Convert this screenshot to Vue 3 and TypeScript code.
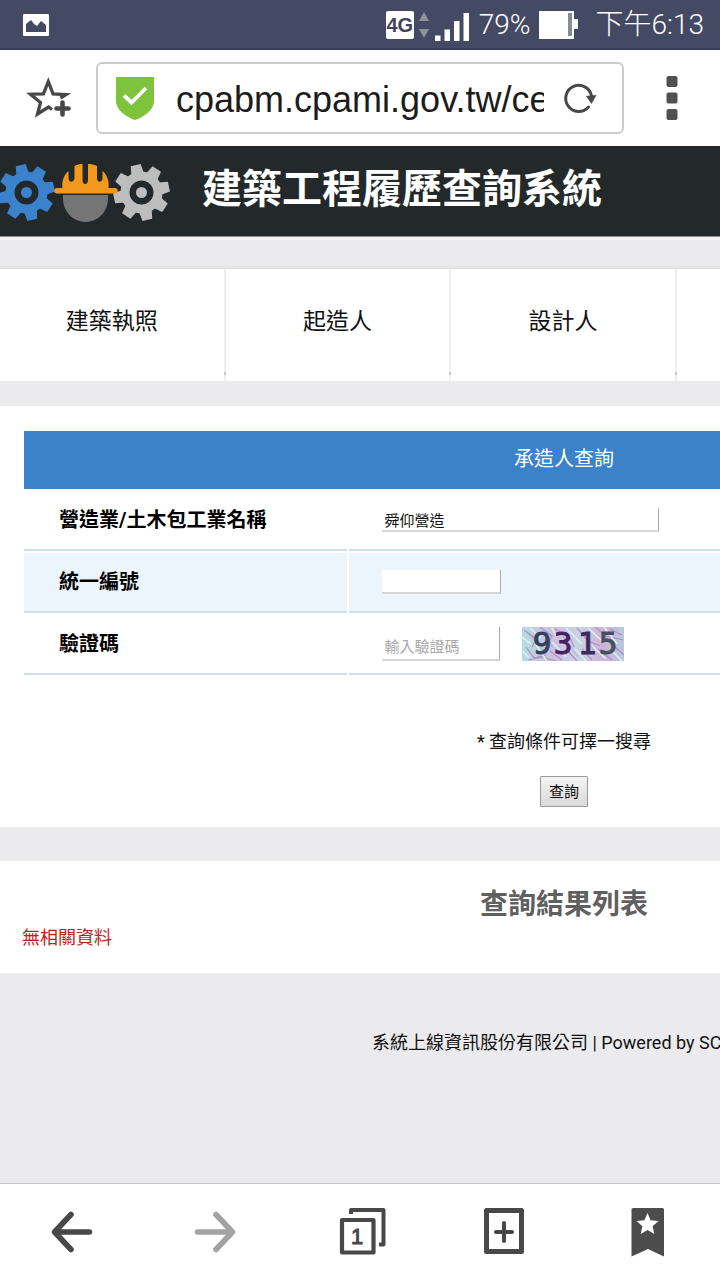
<script setup lang="ts">
import { ref } from 'vue'

interface SearchTab {
  id: number
  label: string
}

const address = ref<string>('cpabm.cpami.gov.tw/ce')
const company = ref<string>('舜仰營造')
const taxId = ref<string>('')
const captcha = ref<string>('')

const tabs: SearchTab[] = [
  { id: 1, label: '建築執照' },
  { id: 2, label: '起造人' },
  { id: 3, label: '設計人' },
]

const toothAngles: number[] = [-12, 33, 78, 123, 168, 213, 258, 303]
const captchaDigits = [
  { x: 20, value: '9', color: '#33405c' },
  { x: 41, value: '3', color: '#4b1f66' },
  { x: 65, value: '1', color: '#3d2a63' },
  { x: 86, value: '5', color: '#465064' },
]
</script>

<template>
  <div class="phone">
    <div class="status">
      <svg class="photo" width="26" height="22" viewBox="0 0 26 22" aria-hidden="true">
        <rect width="26" height="22" rx="1" fill="#fff" />
        <path d="M3 18V10L8 6L11 10L14 12L18 7L23 11V18Z" fill="#454a64" />
      </svg>
      <span class="network">4G</span>
      <svg class="traffic" width="10" height="26" viewBox="0 0 10 26" aria-hidden="true">
        <path d="M5 0L10 9H0ZM0 17H10L5 26Z" fill="#8d909f" />
      </svg>
      <svg class="signal" width="34" height="28" viewBox="0 0 34 28" aria-hidden="true">
        <path d="M0 22.500H5.500V28H0ZM9.500 16.500H15V28H9.500ZM19 8H24.500V28H19ZM28.500 0H34V28H28.500Z" fill="#fff" />
      </svg>
      <span class="percent">79%</span>
      <svg class="battery" width="39" height="28" viewBox="0 0 39 28" aria-hidden="true">
        <path d="M0 0H35V8H39V18H35V28H0Z" fill="#fff" />
        <rect x="29" y="2" width="4" height="23" fill="#858a9c" />
      </svg>
      <span class="clock">下午6:13</span>
    </div>

    <div class="toolbar">
      <button class="tool" type="button" aria-label="加入書籤">
        <svg width="48" height="48" viewBox="24 75 48 48">
          <path d="M60.500 99L66 95.500L53 94.800L48.300 82.500L43.500 94.800L30.500 95.200L40.500 103.500L37.500 115L48.500 108L52 110.500" fill="none" stroke="#484848" stroke-width="3.300" />
          <path d="M62.500 103.500V115.500M56.500 109.500H68.500" fill="none" stroke="#484848" stroke-width="4.600" stroke-linecap="round" />
        </svg>
      </button>
      <div class="address">
        <svg width="38" height="44" viewBox="0 0 38 44" aria-hidden="true">
          <path d="M0 1H38V25C38 34 28 41 19 44C10 41 0 34 0 25Z" fill="#7dc33c" />
          <path d="M8 19.500L15.500 26.500L30 12" fill="none" stroke="#fff" stroke-width="3.800" />
        </svg>
        <input v-model="address" type="text" aria-label="網址" />
        <button class="reload" type="button" aria-label="重新載入">
          <svg width="36" height="36" viewBox="0 0 36 36">
            <path d="M26.500 27A13 13 0 1 1 29.500 16" fill="none" stroke="#484848" stroke-width="3" stroke-linecap="round" />
            <path d="M24 16L34.500 15L29.500 24Z" fill="#484848" />
          </svg>
        </button>
      </div>
      <button class="tool" type="button" aria-label="選單">
        <svg width="12" height="44" viewBox="0 0 12 44">
          <rect x="0.500" width="11" height="11" rx="2" fill="#505050" />
          <rect x="0.500" y="16.500" width="11" height="11" rx="2" fill="#505050" />
          <rect x="0.500" y="33" width="11" height="11" rx="2" fill="#505050" />
        </svg>
      </button>
    </div>

    <div class="viewport">
      <div class="site">
        <header class="banner">
          <svg width="172" height="66" viewBox="0 160 172 66" aria-hidden="true">
            <g transform="translate(26.500 192.500)" fill="#3b82cd">
              <path v-for="angle in toothAngles" :key="angle" d="M-6.500 -18L-5 -28H5L6.500 -18Z" :transform="`rotate(${angle})`" />
              <circle r="16.500" fill="none" stroke="#3b82cd" stroke-width="9" />
              <circle r="5.500" />
            </g>
            <g transform="translate(141.500 192.500)" fill="#bdbdbd">
              <path v-for="angle in toothAngles" :key="angle" d="M-6.500 -18L-5 -28H5L6.500 -18Z" :transform="`rotate(${angle})`" />
              <circle r="16.500" fill="none" stroke="#bdbdbd" stroke-width="9" />
              <circle r="5.500" />
            </g>
            <path d="M63 195H108V199A22.500 23 0 0 1 63 199Z" fill="#757575" />
            <path d="M57 188H62.500C61.500 181 64 175 68.500 171V178C68.500 183 74 183 74.500 178V166C77 164.500 80 164 82.500 164V180C82.500 185.500 88 185.500 88 180V164C91 164 94 164.500 97 166V178C97 183 102.500 183 102.500 178V171C107 175 109.500 181 108.500 188H115A2 2 0 0 1 115 193.500H57A2 2 0 0 1 57 188Z" fill="#f4981d" />
          </svg>
          <h1>建築工程履歷查詢系統</h1>
        </header>

        <nav class="tabs">
          <a v-for="tab in tabs" :key="tab.id" href="#">{{ tab.label }}</a>
          <span class="rest"></span>
        </nav>

        <form class="panel" @submit.prevent>
          <table>
            <colgroup>
              <col class="names" />
              <col />
            </colgroup>
            <thead>
              <tr>
                <th colspan="2">承造人查詢</th>
              </tr>
            </thead>
            <tbody>
              <tr>
                <th scope="row"><label for="company">營造業/土木包工業名稱</label></th>
                <td><div class="field"><input id="company" v-model="company" class="wide" type="text" /></div></td>
              </tr>
              <tr class="tinted">
                <th scope="row"><label for="tax-id">統一編號</label></th>
                <td><div class="field"><input id="tax-id" v-model="taxId" type="text" /></div></td>
              </tr>
              <tr>
                <th scope="row"><label for="captcha">驗證碼</label></th>
                <td>
                  <div class="field">
                    <input id="captcha" v-model="captcha" class="tall" type="text" placeholder="輸入驗證碼" />
                    <svg class="code" width="102" height="34" viewBox="0 0 102 34">
                      <defs>
                        <linearGradient id="noise-base" x1="0" y1="0" x2="1" y2="0">
                          <stop offset="0" stop-color="#b4dce4" />
                          <stop offset="0.300" stop-color="#cbbfe0" />
                          <stop offset="0.550" stop-color="#c9d3e4" />
                          <stop offset="0.800" stop-color="#d0b2d7" />
                          <stop offset="1" stop-color="#b9c9dc" />
                        </linearGradient>
                      </defs>
                      <rect width="102" height="34" fill="url(#noise-base)" />
                      <path d="M2 3L14 12L10 20M18 0L30 9L27 15M4 20L12 31L24 28M28 24L40 33M33 2L48 11L52 20M46 24L55 34M55 1L66 14L78 19M73 0L84 9L101 13M60 22L70 33M76 22L90 33M92 19L102 28M6 33L20 30L34 34M88 2L100 8" fill="none" stroke="#b48cc0" stroke-width="1.200" />
                      <path d="M0 10L9 17M8 1L19 11M14 18L24 33M30 1L34 9M30 15L44 30M44 1L60 17M53 22L64 34M66 1L80 14M69 18L84 32M82 0L95 17M90 24L100 34M1 24L7 31" fill="none" stroke="#dcf1f2" stroke-width="1.600" />
                      <path d="M6 6L22 24M24 4L30 20M38 5L56 30M62 6L74 28M80 6L98 24" fill="none" stroke="#94a3bd" stroke-width="0.700" />
                      <text
                        v-for="digit in captchaDigits"
                        :key="digit.value"
                        :x="digit.x"
                        y="27"
                        :fill="digit.color"
                        :stroke="digit.color"
                        class="digit"
                      >{{ digit.value }}</text>
                    </svg>
                  </div>
                </td>
              </tr>
            </tbody>
          </table>
          <p>* 查詢條件可擇一搜尋</p>
          <button type="submit">查詢</button>
        </form>

        <section class="results">
          <h2>查詢結果列表</h2>
          <p>無相關資料</p>
        </section>

        <footer>系統上線資訊股份有限公司 | Powered by SC</footer>
      </div>
    </div>

    <nav class="bottom">
      <button type="button" aria-label="上一頁">
        <svg width="48" height="48" viewBox="0 0 48 48">
          <path d="M8 24H41.500M23 6.500L6.500 24L23 41.500" fill="none" stroke="#484848" stroke-width="5.600" stroke-linecap="round" stroke-linejoin="round" />
        </svg>
      </button>
      <button type="button" aria-label="下一頁" disabled>
        <svg width="48" height="48" viewBox="0 0 48 48">
          <path d="M5.500 24H40M24 6.500L40.500 24L24 41.500" fill="none" stroke="#a3a3a3" stroke-width="5.600" stroke-linecap="round" stroke-linejoin="round" />
        </svg>
      </button>
      <button type="button" aria-label="分頁">
        <svg width="52" height="48" viewBox="-2 0 52 48">
          <path d="M15 6V2H47.500V36.500H43" fill="none" stroke="#484848" stroke-width="4" stroke-linejoin="round" />
          <rect x="6" y="12" width="31.500" height="32.500" fill="none" stroke="#484848" stroke-width="4.200" stroke-linejoin="round" />
          <text x="21" y="36" class="count">1</text>
        </svg>
      </button>
      <button type="button" aria-label="新增分頁">
        <svg width="48" height="48" viewBox="0 0 48 48">
          <rect x="6.500" y="2.500" width="35" height="41" fill="none" stroke="#484848" stroke-width="5" stroke-linejoin="round" />
          <path d="M24 15V33M16 24H32" fill="none" stroke="#484848" stroke-width="4" stroke-linecap="round" />
        </svg>
      </button>
      <button type="button" aria-label="書籤">
        <svg width="48" height="48" viewBox="0 0 48 48">
          <path d="M9 0H38.500A1.500 1.500 0 0 1 40 1.500V48.500L24 41L7.500 48.500V1.500A1.500 1.500 0 0 1 9 0Z" fill="#4c4c4c" />
          <path d="M23.500 5L26.600 12.200L34.500 13L28.600 18.200L30.300 26L23.500 22L16.700 26L18.400 18.200L12.500 13L20.400 12.200Z" fill="#fff" />
        </svg>
      </button>
    </nav>
  </div>
</template>

<style>
body {
  background: #ebebed;
}
</style>

<style scoped>
* {
  box-sizing: border-box;
}

.phone {
  display: flex;
  flex-direction: column;
  min-height: 100vh;
  overflow: hidden;
  font-family: Roboto, "Noto Sans CJK TC", sans-serif;
  color: #111;
}

button {
  display: flex;
  align-items: center;
  justify-content: center;
  padding: 0;
  border: 0;
  background: none;
}

svg {
  display: block;
  flex: none;
  overflow: visible;
}

h1,
h2,
p {
  margin: 0;
}

.status {
  display: flex;
  align-items: center;
  height: 50px;
  padding: 2px 16px 0 23px;
  border-bottom: 2px solid #3a3e56;
  background: #454a64;
  color: #fff;
  font-size: 28px;
  font-weight: 300;
  line-height: 48px;
}

.network {
  width: 28px;
  height: 28px;
  margin-left: auto;
  border-radius: 2px;
  background: #fff;
  color: #3f435c;
  font: bold 20px/28px "Liberation Sans", sans-serif;
  text-align: center;
}

.traffic {
  margin-left: 5px;
}

.signal {
  margin: 4px 10px 0 6px;
}

.battery {
  margin: 0 18px 0 8px;
}

.toolbar {
  display: flex;
  align-items: center;
  height: 96px;
  background: #fff;
}

.tool {
  width: 96px;
  height: 96px;
}

.address {
  display: flex;
  flex: 1;
  align-items: center;
  min-width: 0;
  height: 72px;
  padding: 0 24px 0 18px;
  border: 2px solid #ccc;
  border-radius: 6px;
}

.address input {
  flex: 1;
  min-width: 0;
  height: 60px;
  margin: 4px 18px 0 22px;
  padding: 0;
  border: 0;
  outline: 0;
  background: none;
  color: #1c1c1c;
  font: 36px "Liberation Sans", sans-serif;
}

.reload {
  width: 36px;
  height: 60px;
}

.viewport {
  flex: 1;
  overflow: hidden;
}

.site {
  min-width: 1128px;
}

.banner {
  display: flex;
  align-items: center;
  gap: 30px;
  height: 91px;
  padding-top: 3px;
  border-bottom: 1px solid #8c8f90;
  background: #23292b;
  box-shadow: 0 3px 0 #f2f2f3;
  color: #fff;
}

.banner h1 {
  padding-bottom: 6px;
  font-size: 40px;
  line-height: 60px;
}

.tabs {
  display: grid;
  grid-template-columns: repeat(5, 1fr);
  margin: 32px 0 25px;
  background: #fff;
  box-shadow: 0 -1px 3px #d9d9dc;
}

.tabs a {
  position: relative;
  height: 112px;
  border-right: 2px solid #efeff1;
  color: #111;
  font-size: 23px;
  line-height: 106px;
  text-align: center;
  text-decoration: none;
}

.tabs a::after {
  content: "";
  position: absolute;
  right: -2px;
  bottom: 6px;
  width: 2px;
  height: 3px;
  background: #c9c9cc;
}

.rest {
  grid-column: span 2;
}

.panel {
  padding: 23px 22px 20px;
  background: #fff;
}

table {
  width: 100%;
  border-spacing: 2px;
  table-layout: fixed;
}

.names {
  width: 30%;
}

th,
td {
  padding: 0;
  text-align: left;
}

thead th {
  height: 58px;
  padding-bottom: 6px;
  background: #3c82c9;
  color: #fff;
  font-size: 20px;
  font-weight: 400;
  text-align: center;
}

tbody th {
  height: 60px;
  padding: 0 0 3px 35px;
  border-bottom: 2px solid #cfe0ec;
  color: #000;
  font-size: 20px;
}

tbody td {
  padding-left: 33px;
  border-bottom: 2px solid #cfe0ec;
}

.tinted th,
.tinted td {
  background: #ecf5fc;
}

.field {
  display: flex;
  align-items: center;
  gap: 22px;
}

.field input {
  width: 119px;
  height: 24px;
  padding: 0 2px;
  border: 0 solid;
  border-width: 0 1px 2px 0;
  border-color: #aaa #aaa #d6d6d6;
  outline: 0;
  background: #fff;
  color: #111;
  font: 15px/22px Roboto, "Noto Sans CJK TC", sans-serif;
}

.field .wide {
  width: 277px;
}

.field .tall {
  width: 118px;
  height: 34px;
  padding-top: 8px;
}

.field input::placeholder {
  color: #a9a9a9;
}

.code {
  overflow: hidden;
}

.digit {
  font: 31px "DejaVu Sans Mono", monospace;
  stroke-width: 1px;
  text-anchor: middle;
}

.panel p {
  margin-top: 52px;
  font-size: 18px;
  line-height: 26px;
  text-align: center;
}

.panel > button {
  width: 48px;
  height: 31px;
  margin: 21px auto 0;
  border: 1px solid #999;
  border-radius: 1px;
  background: linear-gradient(#f4f4f4, #d9d9d9);
  color: #111;
  font: 15px/22px Roboto, "Noto Sans CJK TC", sans-serif;
}

.results {
  margin-top: 34px;
  padding: 24px 22px 22px;
  background: #fff;
}

.results h2 {
  color: #606060;
  font-size: 28px;
  line-height: 40px;
  text-align: center;
}

.results p {
  color: #bd1e1e;
  font-size: 18px;
  line-height: 26px;
}

footer {
  padding: 57px 0 20px 372px;
  font-size: 18px;
  line-height: 26px;
}

.bottom {
  display: grid;
  grid-template-columns: repeat(5, 1fr);
  height: 97px;
  border-top: 1px solid #c6c6c8;
  background: #fff;
}

.count {
  fill: #484848;
  stroke: #484848;
  font: 22px "Liberation Sans", sans-serif;
  text-anchor: middle;
}
</style>
